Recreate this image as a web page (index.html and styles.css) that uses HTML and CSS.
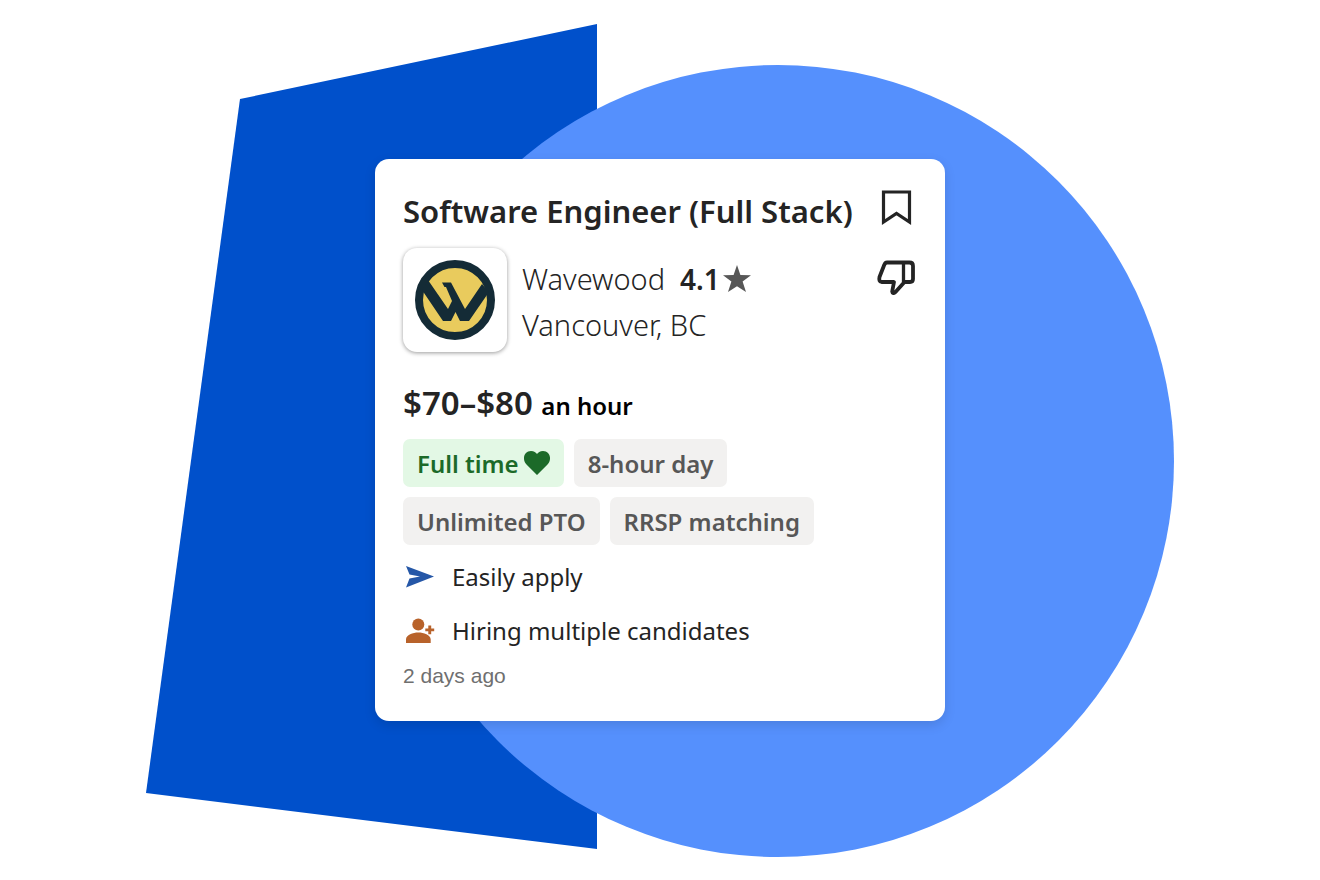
FILE: index.html
```html
<!DOCTYPE html>
<html lang="en">
<head>
<meta charset="utf-8">
<meta name="viewport" content="width=device-width, initial-scale=1">
<title>Software Engineer (Full Stack)</title>
<link rel="stylesheet" href="styles.css">
</head>
<body>
<main class="stage">
  <svg class="backdrop" viewBox="0 0 1320 880" preserveAspectRatio="xMidYMid meet" aria-hidden="true">
    <path fill="#0050cb" d="M240 99 597 24V849L146 793Z"/>
    <circle fill="#5590fd" cx="778" cy="461" r="396"/>
  </svg>
  <article class="card">
    <header class="top">
      <h1 class="title">Software Engineer (Full Stack)</h1>
      <button class="icon-button" type="button" aria-label="Save job">
        <svg width="38" height="38" viewBox="0 0 38 38"><path d="M6.500 3H32.500V33L19.500 24.500 6.500 33Z" fill="none" stroke="#242424" stroke-width="3.200"/></svg>
      </button>
    </header>
    <section class="company">
      <div class="logo">
        <svg width="80" height="80" viewBox="0 0 80 80" role="img" aria-label="Wavewood logo">
          <circle cx="40" cy="40" r="36" fill="#e9cb5d" stroke="#142b36" stroke-width="8"/>
          <path fill="#142b36" d="M7 30 28 61H36L40.500 52 45 61H54L74 32 67 24 50 49 36 22.500H27L29.500 27H31L37 41 33 49 13 20Z"/>
        </svg>
      </div>
      <div class="details">
        <p class="name"><span>Wavewood</span> <strong class="rating">4.1<svg width="30" height="30" viewBox="0 0 30 30" role="img" aria-label="stars"><path fill="#575757" d="M15 1 18.400 11 29 11.200 20.600 17.500 24 28 15 22.300 6 28 9.400 17.500 1 11.200 11.600 11Z"/></svg></strong></p>
        <p class="place">Vancouver, BC</p>
      </div>
      <button class="icon-button dislike" type="button" aria-label="Not interested">
        <svg width="38" height="38" viewBox="0 0 38 38"><g fill="none" stroke="#242424" stroke-width="3.800" stroke-linejoin="round"><path d="M10 3.500H32.500Q36 3.500 36 7V20Q36 23 33 23H27.500L18.500 33Q15.500 35.500 15.200 32.500L17 23H4.500Q1.500 22.500 2.500 18L7 6.500Q8 3.500 10 3.500Z"/><path stroke-width="3.300" d="M26.500 4V23"/></g></svg>
      </button>
    </section>
    <p class="salary">$70–$80 <span class="period">an hour</span></p>
    <ul class="tags">
      <li class="tag match">Full time <svg width="26" height="26" viewBox="1 0 26 26" aria-hidden="true"><path fill="#1c6a29" d="M14 25 3.500 14.500C-1 10 .5 1 8 1 11 1 13 2.500 14 4 15 2.500 17 1 20 1 27.500 1 29 10 24.500 14.500Z"/></svg></li>
      <li class="tag">8-hour day</li>
      <li class="tag">Unlimited PTO</li>
      <li class="tag">RRSP matching</li>
    </ul>
    <ul class="notes">
      <li class="note"><svg width="34" height="30" viewBox="0 0 34 30" aria-hidden="true"><path fill="#2557a7" d="M3 4 31 14.500 3 25.500 6.500 16.500 17 14.500 6.500 12.500Z"/></svg>Easily apply</li>
      <li class="note"><svg width="34" height="30" viewBox="0 0 34 30" aria-hidden="true"><g fill="#b8622a"><circle cx="15.300" cy="8.500" r="6"/><path d="M3 27V23.500C3 19 10 16.600 15.300 16.600S27.700 19 27.700 23.500V27ZM25.300 9.500H28.200V12.500H31.200V15.300H28.200V18.300H25.300V15.300H22.300V12.500H25.300Z"/></g></svg>Hiring multiple candidates</li>
    </ul>
    <p class="posted">2 days ago</p>
  </article>
</main>
</body>
</html>
```
FILE: styles.css
```css
* { box-sizing: border-box; }
body, h1, p, ul { margin: 0; padding: 0; }
ul { list-style: none; }
svg { display: block; flex: none; }

body {
  background: #fff;
  color: #242424;
  font-family: "Noto Sans", sans-serif;
}

.stage {
  position: relative;
  display: grid;
  place-items: center;
  min-height: 100vh;
}

.backdrop {
  position: absolute;
  inset: 0;
  width: 100%;
  height: 100%;
}

.card {
  position: relative;
  width: 100%;
  max-width: 570px;
  padding: 30px 30px 27px 28px;
  border-radius: 14px;
  background: #fff;
  box-shadow: 0 4px 12px rgba(0, 0, 0, 0.12);
}

.top {
  display: flex;
  justify-content: space-between;
}

.title {
  font-size: 31px;
  font-weight: 600;
  line-height: 44px;
  white-space: nowrap;
}

.icon-button {
  flex: none;
  width: 38px;
  height: 38px;
  padding: 0;
  border: 0;
  background: none;
  cursor: pointer;
}

.company {
  display: flex;
  gap: 15px;
  margin-top: 15px;
}

.logo {
  display: grid;
  place-items: center;
  flex: none;
  width: 104px;
  height: 104px;
  border-radius: 14px;
  background: #fff;
  box-shadow: 0 1px 4px rgba(0, 0, 0, 0.4);
}

.details {
  flex: 1;
  padding-top: 8px;
  font-size: 29px;
  font-weight: 300;
  line-height: 46px;
}

.name, .rating { display: flex; }
.name { gap: 15px; }
.rating {
  align-items: center;
  gap: 2px;
  font-size: 28px;
  font-weight: 600;
}

.dislike { margin-top: 11px; }

.salary {
  margin-top: 27px;
  font-size: 33px;
  font-weight: 600;
  line-height: 48px;
}

.period {
  color: #000;
  font-size: 24px;
  line-height: 24px;
}

.tags {
  display: flex;
  flex-wrap: wrap;
  gap: 10px;
  margin-top: 12px;
  padding-right: 60px;
}

.tag {
  display: flex;
  align-items: center;
  gap: 5px;
  height: 48px;
  padding: 0 14px;
  border-radius: 7px;
  background: #f2f1f0;
  color: #575757;
  font-size: 24px;
  font-weight: 600;
}

.match {
  background: #e3f8e5;
  color: #1c6a29;
}

.notes { margin-top: 5px; }

.note {
  display: flex;
  align-items: center;
  gap: 15px;
  font-size: 24px;
  line-height: 54px;
}

.posted {
  color: #6f6f6f;
  font-family: "Liberation Sans", Arial, sans-serif;
  font-size: 21px;
  line-height: 36px;
}
```
